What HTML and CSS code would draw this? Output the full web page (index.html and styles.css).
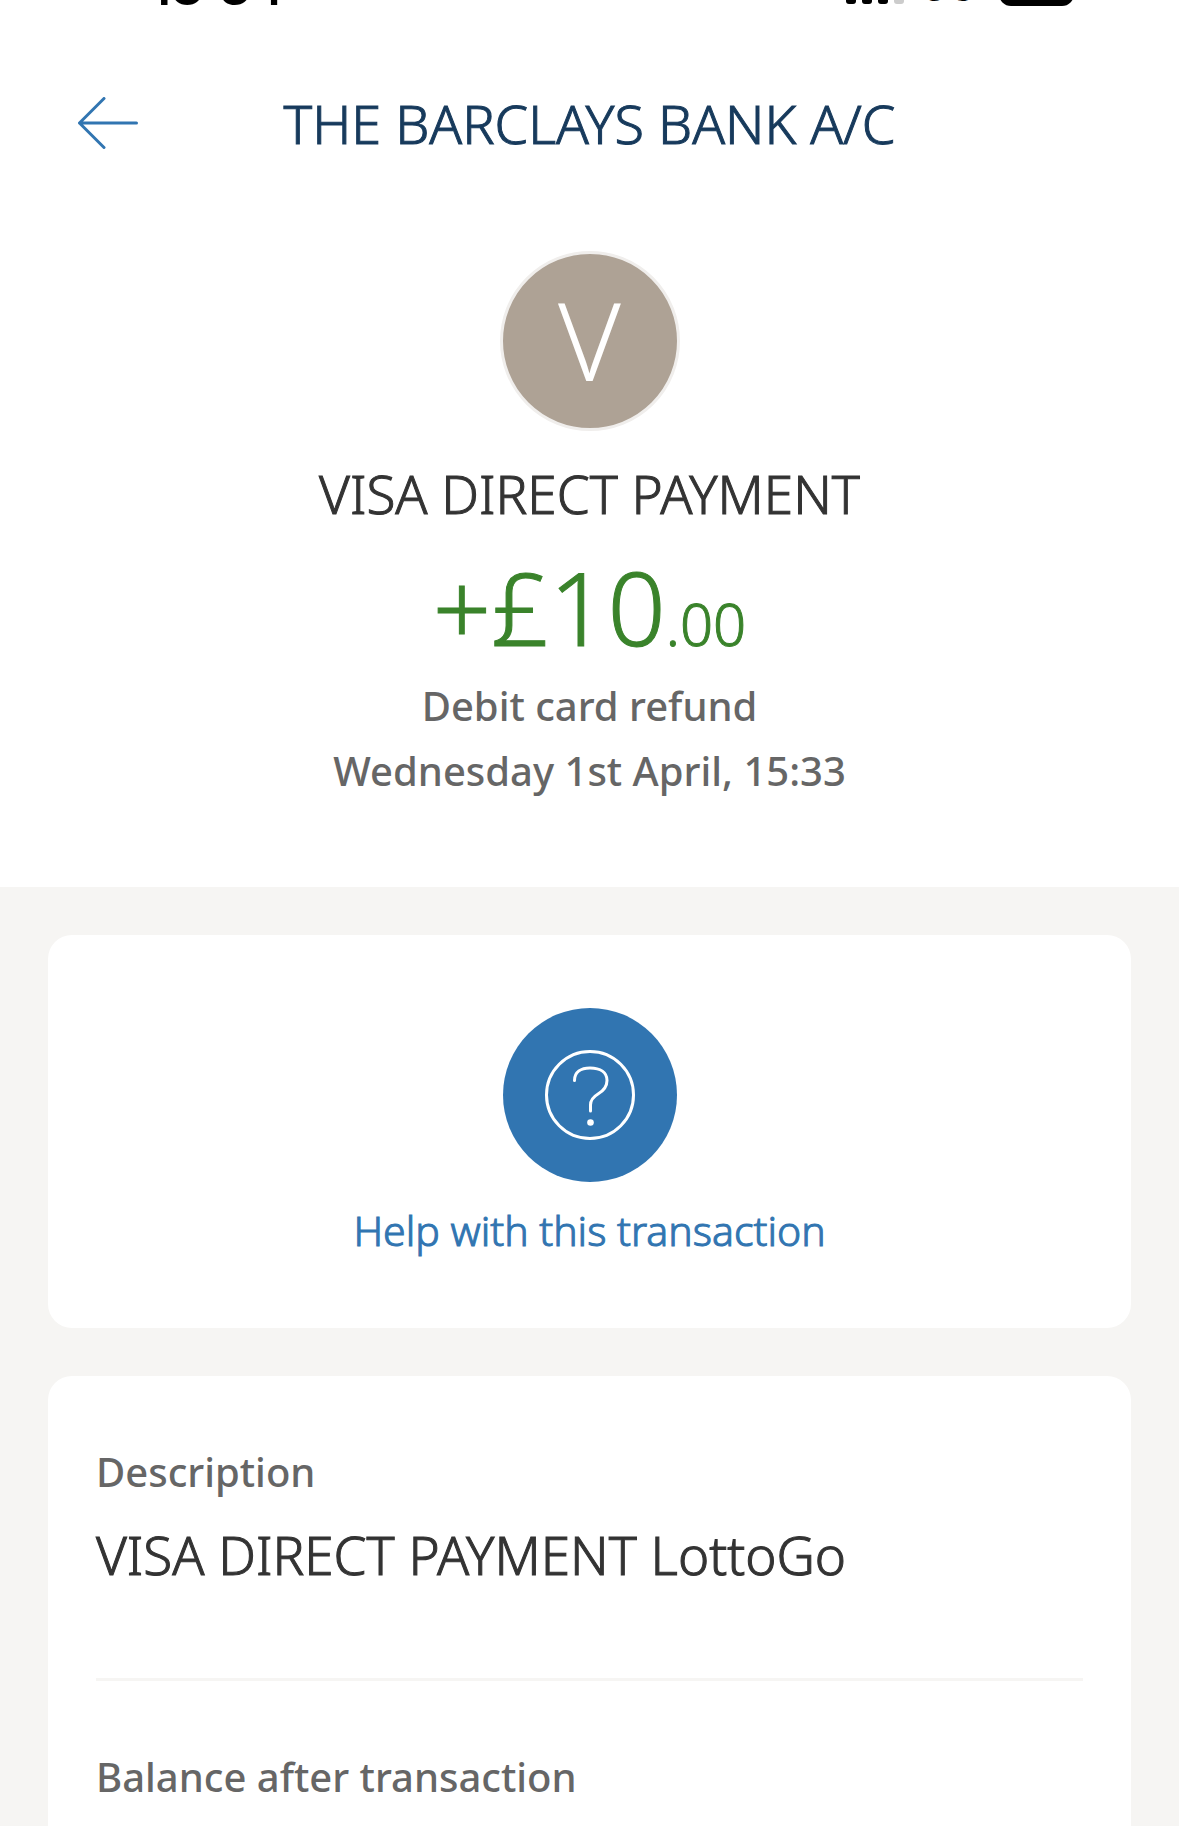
FILE: index.html
```html
<!DOCTYPE html>
<html lang="en-GB">
<head>
<meta charset="utf-8">
<meta name="viewport" content="width=device-width, initial-scale=1">
<title>Transaction details</title>
<link rel="stylesheet" href="styles.css">
</head>
<body>
<div class="page">
  <div class="status">
    <span class="status-time">18:34</span>
    <div class="status-right">
      <svg class="signal" viewBox="0 0 58 40" aria-hidden="true">
        <rect x="0" y="24" width="10" height="16" rx="3"/>
        <rect x="16" y="16" width="10" height="24" rx="3"/>
        <rect x="32" y="8" width="10" height="32" rx="3"/>
        <rect class="signal-off" x="48" y="0" width="10" height="40" rx="3"/>
      </svg>
      <span class="status-network">5G</span>
      <span class="battery"></span>
    </div>
  </div>
  <header class="header">
    <button class="back" type="button" aria-label="Back">
      <svg viewBox="0 0 60 52" aria-hidden="true"><path d="M26 1.500 1.500 26 26 50.500M1.500 26H58.500"/></svg>
    </button>
    <h1 class="title">THE BARCLAYS BANK A/C</h1>
  </header>
  <section class="summary">
    <div class="avatar">V</div>
    <h2 class="merchant">VISA DIRECT PAYMENT</h2>
    <p class="amount">+£10<span class="pence">.00</span></p>
    <p class="meta">Debit card refund</p>
    <p class="meta">Wednesday 1st April, 15:33</p>
  </section>
  <main class="content">
    <section class="card help-card">
      <a class="help" href="#help">
        <svg class="help-icon" viewBox="0 0 174 174" aria-hidden="true">
          <circle class="disc" cx="87" cy="87" r="87"/>
          <circle class="line" cx="87" cy="87" r="43.500"/>
          <path class="line" d="M71.500 72.500C71.500 64 78 60 87 60C97.500 60 104 64.500 104 72.500C104 79 101 82.500 95 86C90 89 87.500 92 87.500 97V103"/>
          <circle class="dot" cx="87.500" cy="114.500" r="3.300"/>
        </svg>
        <span>Help with this transaction</span>
      </a>
    </section>
    <dl class="card details">
      <div class="row">
        <dt>Description</dt>
        <dd>VISA DIRECT PAYMENT LottoGo</dd>
      </div>
      <div class="row">
        <dt>Balance after transaction</dt>
      </div>
    </dl>
  </main>
</div>
</body>
</html>
```
FILE: styles.css
```css
* { box-sizing: border-box; }

body {
  margin: 0;
  background: #fff;
  color: #333;
  font-family: "Noto Sans", "Open Sans", sans-serif;
  font-weight: 300;
}

h1, h2, p, dl, dd { margin: 0; font-weight: inherit; }

/* A touch more weight than the light cut has */
.title, .merchant, .amount, .help span, .row dd {
  -webkit-text-stroke: 1px currentColor;
}

.page {
  display: flex;
  flex-direction: column;
  min-height: 100vh;
}

/* Status bar, scrolled almost out of view */
.status {
  display: flex;
  justify-content: space-between;
  align-items: flex-end;
  height: 20px;
  padding: 0 105px 0 150px;
  overflow: hidden;
  color: #000;
  font-family: Inter, sans-serif;
  line-height: 66px;
}
.status-time { font-size: 50px; font-weight: 600; }
.status-right { display: flex; align-items: flex-end; }
.signal { width: 58px; height: 40px; margin-bottom: 16px; }
.signal-off { fill: #ccc; }
.status-network { margin: 0 22px 0 18px; font-size: 40px; font-weight: 600; }
.battery {
  width: 75px;
  height: 39px;
  margin-bottom: 14px;
  border-radius: 12px;
  background: #000;
}

.header {
  display: grid;
  grid-template-columns: 60px 1fr 60px;
  align-items: center;
  padding: 68px 78px 0;
}
.back {
  height: 52px;
  padding: 0;
  border: 0;
  background: none;
}
.back svg {
  display: block;
  width: 60px;
  height: 52px;
  fill: none;
  stroke: #3175b1;
  stroke-width: 3;
  stroke-linecap: round;
  stroke-linejoin: round;
}
.title {
  color: #173a5c;
  font-size: 54px;
  line-height: 70px;
  text-align: center;
}

.summary {
  display: flex;
  flex-direction: column;
  align-items: center;
  padding: 93px 48px 84px;
  text-align: center;
}
.avatar {
  width: 180px;
  height: 180px;
  border: 3px solid #f0eeec;
  border-radius: 50%;
  background: #aea295;
  color: #fff;
  font-size: 108px;
  line-height: 172px;
}
.merchant {
  margin-top: 27px;
  font-size: 53px;
  line-height: 72px;
}
.amount {
  margin: 21px 0 10px;
  color: #3a832b;
  font-size: 102px;
  line-height: 112px;
}
.pence { font-size: 58px; line-height: 58px; }
.meta {
  color: #666;
  font-size: 40px;
  font-weight: 500;
  line-height: 65px;
}

.content {
  display: flex;
  flex: 1;
  flex-direction: column;
  gap: 48px;
  padding: 48px 48px 0;
  background: #f6f5f3;
}
.card { border-radius: 24px; background: #fff; }
.help-card { padding: 73px 48px 65px; }
.help {
  display: flex;
  flex-direction: column;
  align-items: center;
  gap: 16px;
  color: #3175b1;
  font-size: 41px;
  line-height: 65px;
  text-decoration: none;
}
.help-icon { width: 174px; height: 174px; }
.disc { fill: #3175b1; }
.line {
  fill: none;
  stroke: #fff;
  stroke-width: 3;
  stroke-linecap: round;
}
.dot { fill: #fff; }

.details {
  flex: 1;
  padding: 0 48px;
  border-radius: 24px 24px 0 0;
}
.row { padding: 63px 0 0; }
.row + .row { border-top: 3px solid #f6f5f3; }
.row dt {
  color: #666;
  font-size: 40px;
  font-weight: 500;
  line-height: 65px;
}
.row dd {
  padding: 15px 0 87px;
  font-size: 53px;
  line-height: 72px;
}
```
